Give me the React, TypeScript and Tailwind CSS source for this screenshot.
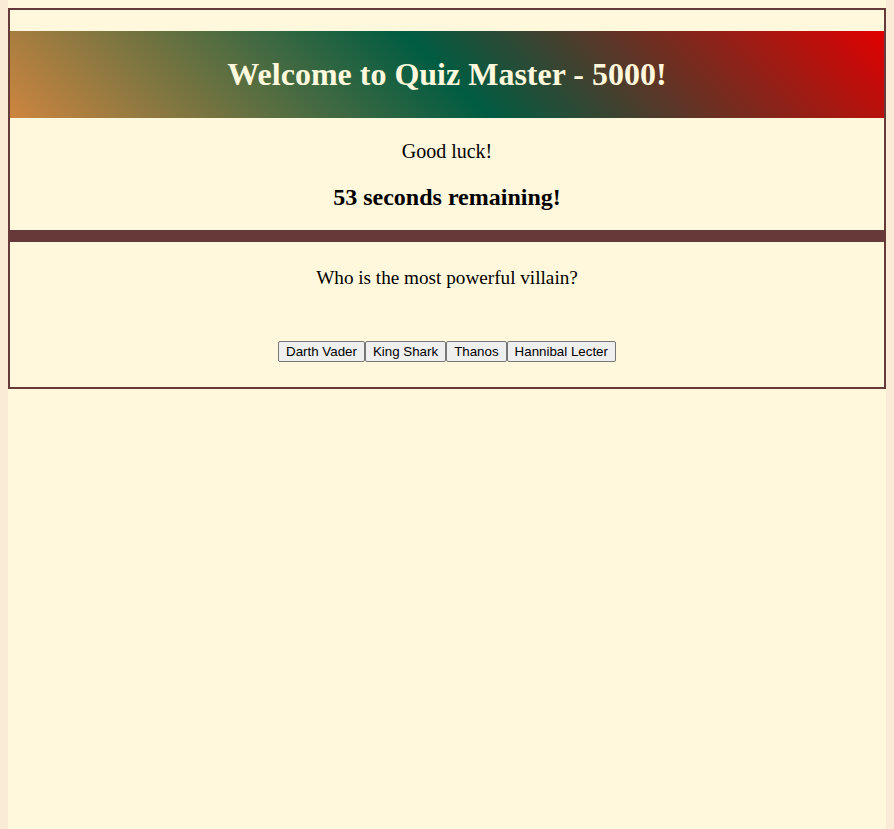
const choices = ["Darth Vader", "King Shark", "Thanos", "Hannibal Lecter"];

export default function App() {
  return (
    <div className="min-h-[829px] bg-[#faebd7] px-2 font-['Liberation_Serif',serif] text-black">
      <div className="min-h-[829px] bg-[#fff8dc] pt-2">
        <main className="border-2 border-[#653a38]">
          <header className="mt-[21px] flex h-[87px] items-center justify-center bg-[linear-gradient(45deg,#cd853f,#005c42_50%,#e00000)]">
            <h1 className="text-[32px] leading-[37px] font-bold text-[#fff8dc]">Welcome to Quiz Master - 5000!</h1>
          </header>

          <section className="flex h-[112px] flex-col items-center">
            <p className="mt-[22px] text-[20px] leading-[23px]">Good luck!</p>
            <p className="mt-[20px] text-[24px] leading-[28px] font-bold">53 seconds remaining!</p>
          </section>

          <div className="h-3 bg-[#653a38]" />

          <section className="flex h-[145px] flex-col items-center">
            <p className="mt-[25px] text-[19.2px] leading-[22px]">Who is the most powerful villain?</p>
            <div className="mt-[52px] flex">
              {choices.map((c) => (
                <button
                  key={c}
                  className="h-[21px] rounded-[2px] border border-[#767676] bg-[#efefef] px-[7px] font-['Liberation_Sans',Arial,sans-serif] text-[13.33px] leading-[15px] text-black"
                >
                  {c}
                </button>
              ))}
            </div>
          </section>
        </main>
      </div>
    </div>
  );
}
